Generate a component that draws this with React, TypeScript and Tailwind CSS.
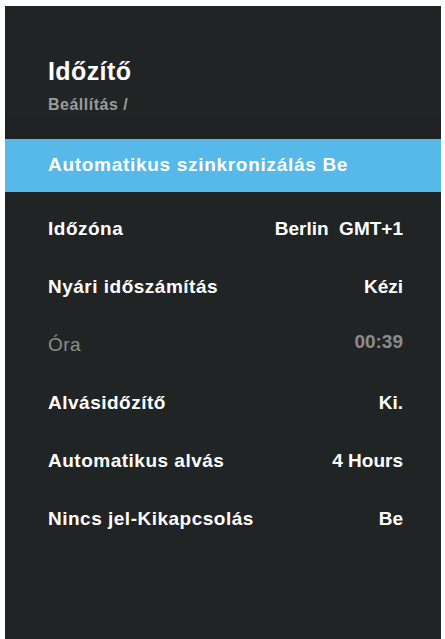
import React from 'react';

const rows = [
  { label: 'Időzóna', value: 'Berlin  GMT+1', dim: false },
  { label: 'Nyári időszámítás', value: 'Kézi', dim: false },
  { label: 'Óra', value: '00:39', dim: true },
  { label: 'Alvásidőzítő', value: 'Ki.', dim: false },
  { label: 'Automatikus alvás', value: '4 Hours', dim: false },
  { label: 'Nincs jel-Kikapcsolás', value: 'Be', dim: false },
];

const App = () => {
  return (
    <div className="w-[445px] h-[639px] bg-white pt-[6px] pl-[5px] pr-[4px] font-['Liberation_Sans',Arial,sans-serif]">
      <div className="h-full bg-[#212425] flex flex-col">
        <div className="pl-[43px] pt-[53px] h-[110px]">
          <h1 className="text-[25px] font-bold text-white leading-none tracking-[0.4px]">Időzítő</h1>
          <p className="mt-[13px] text-[16px] font-bold text-[#9a9a9a] leading-none tracking-[0.5px]">Beállítás /</p>
        </div>
        <div className="h-[23px] bg-[#1f2223]" />
        <div className="h-[53px] bg-[#56b9e9] flex items-center pl-[43px]">
          <span className="text-[19px] font-bold text-white tracking-[0.7px]">Automatikus szinkronizálás Be</span>
        </div>
        <div className="flex flex-col pt-[8px]">
          {rows.map((r) => (
            <div key={r.label} className="h-[58px] flex items-center justify-between pl-[43px] pr-[38px]">
              <span className={(r.dim ? 'font-normal text-[#8c8c8c]' : 'font-bold text-white') + ' text-[19px] tracking-[0.5px]'}>{r.label}</span>
              <span className={(r.dim ? 'text-[#8c8c8c] -mt-[6px]' : 'text-white') + ' text-[19px] font-bold whitespace-pre'}>{r.value}</span>
            </div>
          ))}
        </div>
      </div>
    </div>
  );
};

export default App;
